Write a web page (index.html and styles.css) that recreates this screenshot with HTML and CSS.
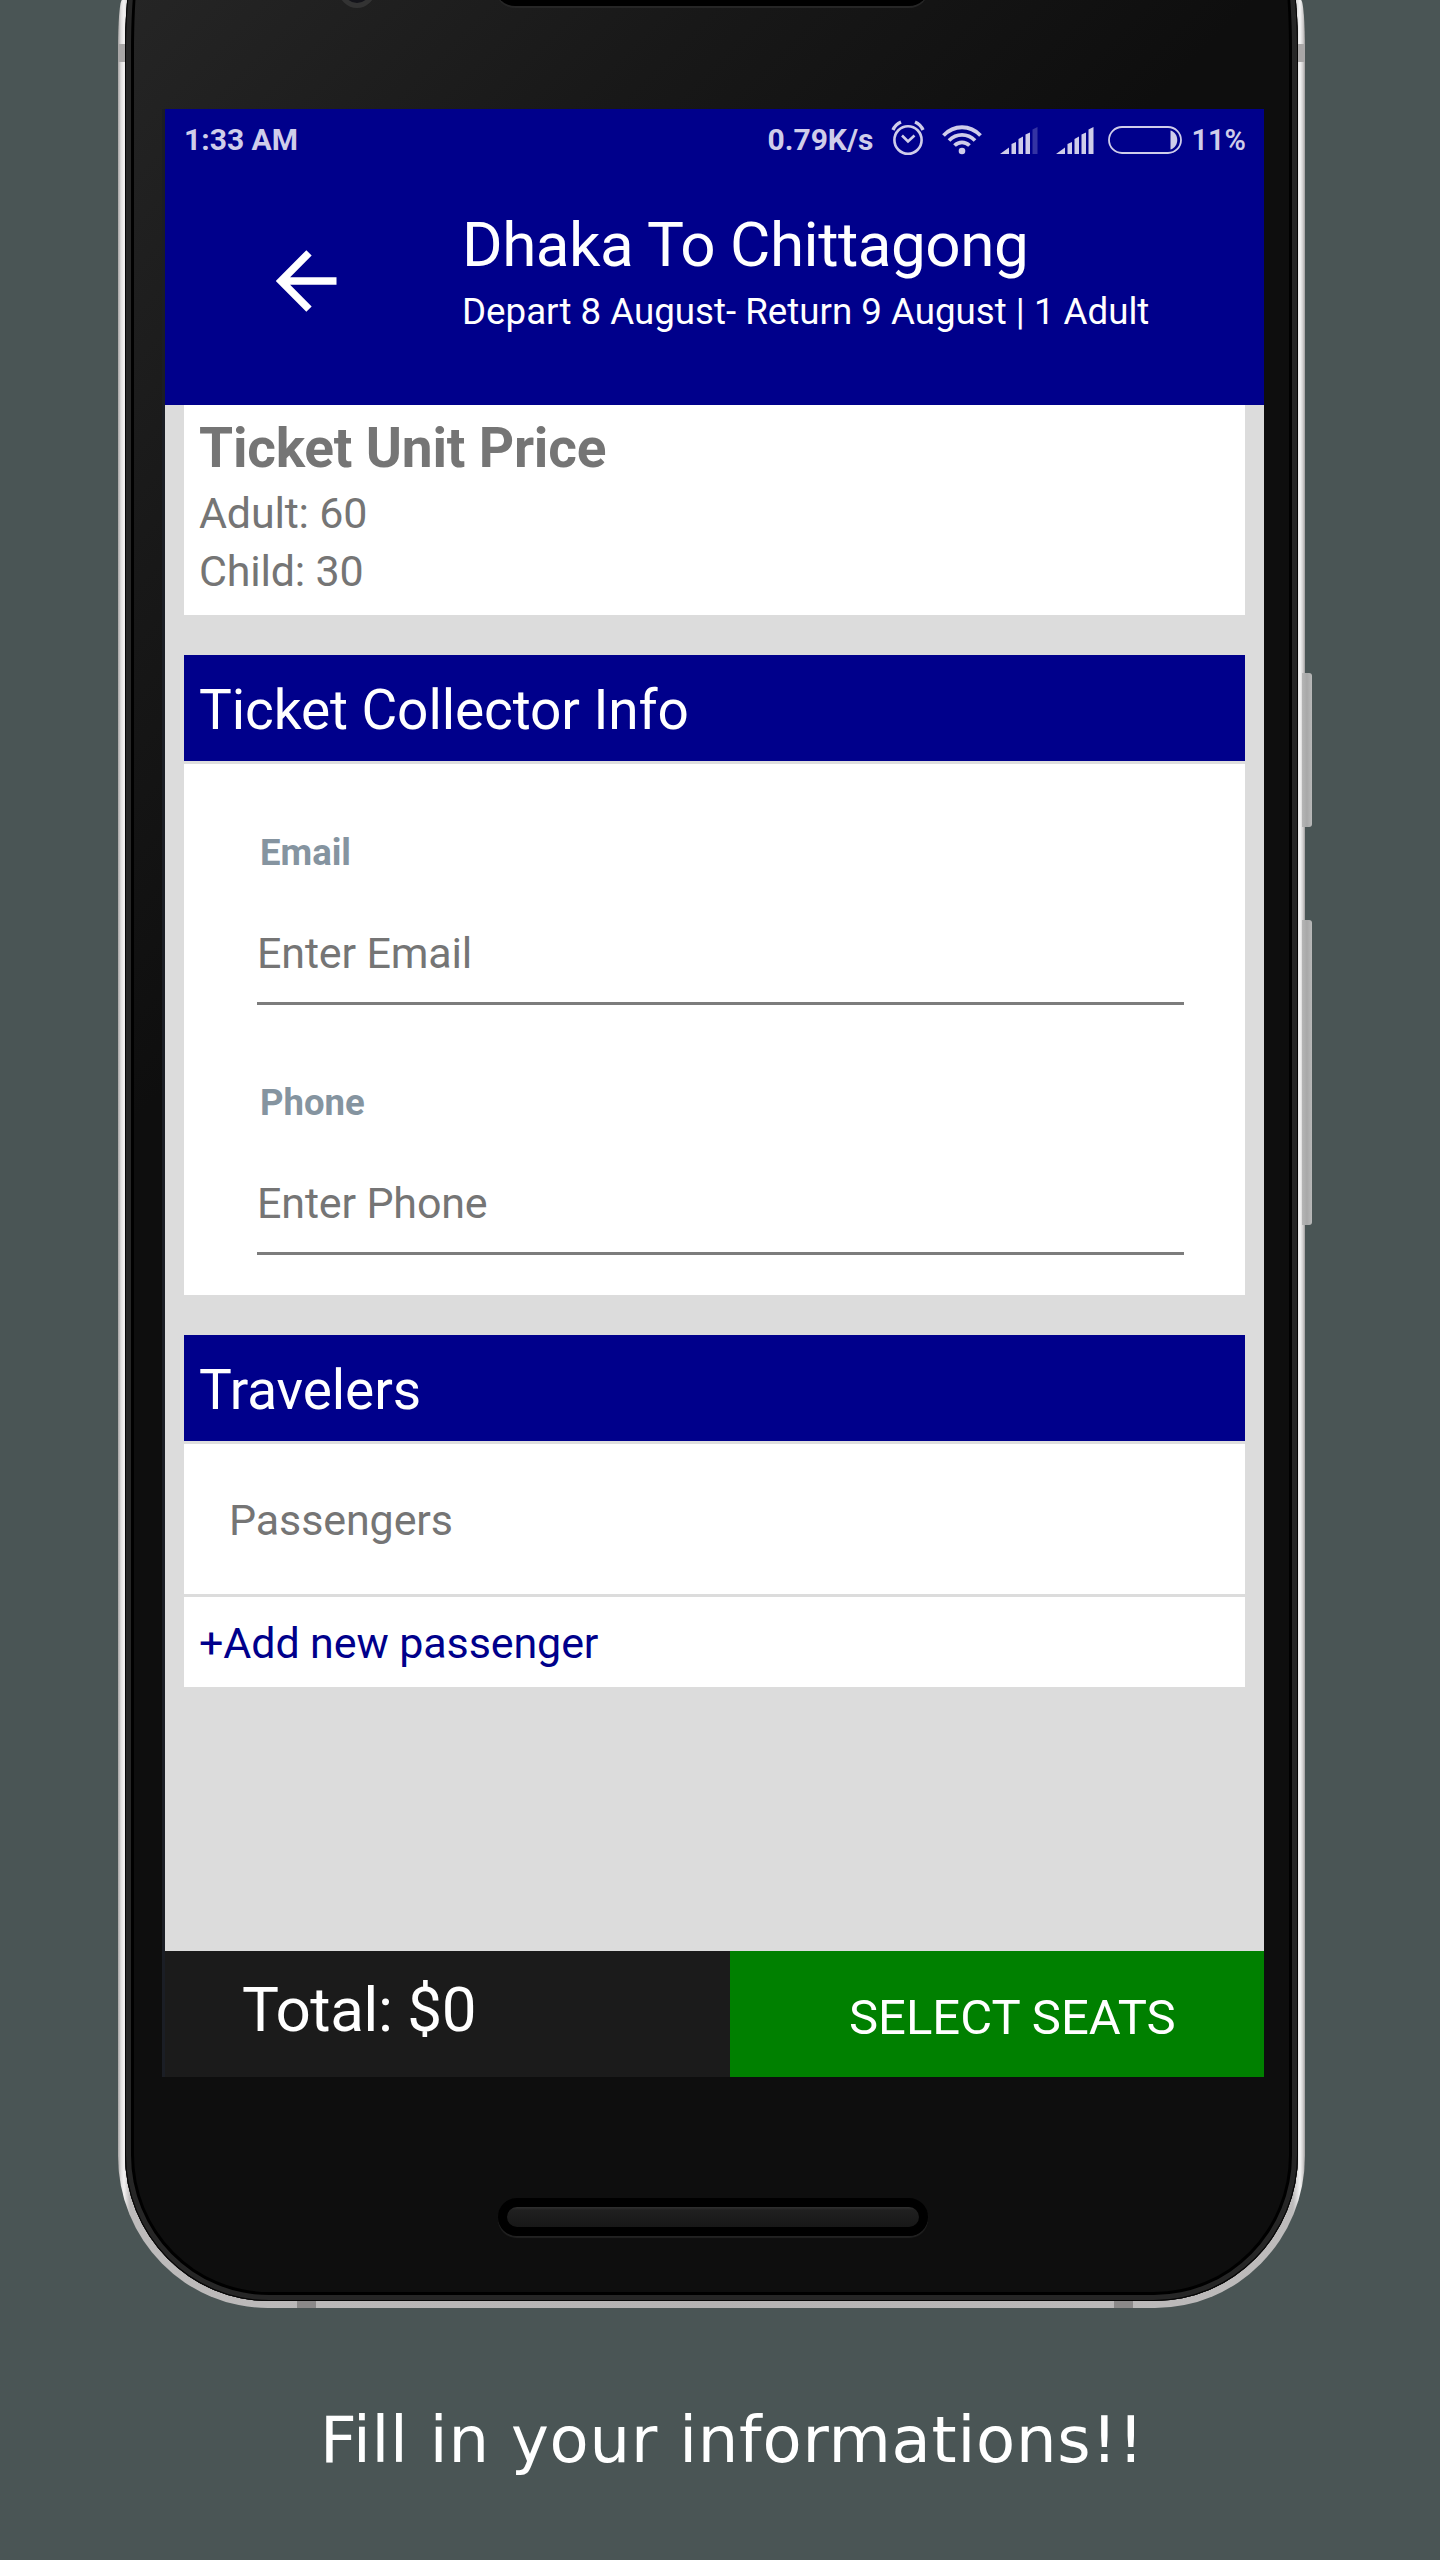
FILE: index.html
```html
<!DOCTYPE html>
<html lang="en">
<head>
<meta charset="utf-8">
<title>Fill in your informations</title>
<link rel="stylesheet" href="styles.css">
</head>
<body>
<main class="page">
  <div class="phone">
    <span class="side-key key-power"></span>
    <span class="side-key key-volume"></span>
    <span class="band band-left"></span>
    <span class="band band-right"></span>
    <span class="band band-bottom-left"></span>
    <span class="band band-bottom-right"></span>
    <div class="bezel">
      <span class="camera"></span>
      <span class="earpiece"></span>
      <div class="screen">
        <header class="app-header">
          <div class="status">
            <span class="t time">1:33 AM</span>
            <span class="t speed">0.79K/s</span>
            <svg class="ico-alarm" width="34" height="36" viewBox="0 0 34 36" fill="none" stroke="#cfcdea" stroke-width="2.6">
              <ellipse cx="17" cy="20" rx="13.6" ry="13.8"/>
              <path d="M11 15.5l6 6 6.5-6"/>
              <path stroke-width="3.4" d="M2 10C3.500 6.500 6.500 3.500 10 2M32 10C30.500 6.500 27.500 3.500 24 2"/>
            </svg>
            <svg class="ico-wifi" width="40" height="30" viewBox="0 0 40 30" fill="none" stroke="#cfcdea" stroke-width="3.8">
              <path d="M1.500 10.500C12-.5 28-.5 38.500 10.500M7 15.500c7.500-7.500 18.500-7.500 26 0M12.500 20.500c4.500-4.300 10.500-4.300 15 0"/>
              <circle cx="20" cy="26" r="3.300" fill="#cfcdea" stroke="none"/>
            </svg>
            <svg class="ico-signal" width="38" height="27" viewBox="0 0 38 27" fill="#cfcdea">
              <path d="M0 27L9 20.500V27zM11.500 27V17l4.500-2v12zM18.500 27V12l4.500-2.500V27zM25.500 27V7.500l4.500-2V27z"/>
              <path opacity=".25" d="M32.500 27V2.500L37.500 0v27z"/>
            </svg>
            <svg class="ico-signal" width="38" height="27" viewBox="0 0 38 27" fill="#cfcdea">
              <path d="M0 27L9 20.500V27zM11.500 27V17l4.500-2v12zM18.500 27V12l4.500-2.500V27zM25.500 27V7.500l4.500-2V27zM32.500 27V2.500L37.500 0v27z"/>
            </svg>
            <svg class="ico-battery" width="74" height="28" viewBox="0 0 74 28">
              <rect x="1" y="1" width="72" height="26" rx="13" fill="none" stroke="#cfcdea" stroke-width="1.800"/>
              <path d="M62.500 4.500c9 2.500 9 16.500 0 19z" fill="#cfcdea"/>
            </svg>
            <span class="t percent">11%</span>
          </div>
          <div class="titlebar">
            <svg class="back" width="61" height="62" viewBox="0 0 61 62" fill="none" stroke="#fff" stroke-width="7.5">
              <path d="M60.500 31H7M33 2.800L5 31l28 28.200"/>
            </svg>
            <div class="titles">
              <h1 class="t title">Dhaka To Chittagong</h1>
              <p class="t subtitle">Depart 8 August- Return 9 August | 1 Adult</p>
            </div>
          </div>
        </header>
        <div class="content">
          <section class="card price">
            <h2 class="t price-title">Ticket Unit Price</h2>
            <p class="t price-row adult">Adult: 60</p>
            <p class="t price-row child">Child: 30</p>
          </section>
          <section class="card collector">
            <h2 class="card-head"><span class="t head-collector">Ticket Collector Info</span></h2>
            <div class="form">
              <label class="field"><span class="t label">Email</span><span class="input"><span class="t hint">Enter Email</span></span></label>
              <label class="field"><span class="t label">Phone</span><span class="input"><span class="t hint">Enter Phone</span></span></label>
            </div>
          </section>
          <section class="card travelers">
            <h2 class="card-head"><span class="t head-travelers">Travelers</span></h2>
            <p class="passengers"><span class="t passengers-text">Passengers</span></p>
            <p class="add"><span class="t add-text">+Add new passenger</span></p>
          </section>
        </div>
        <footer class="bottom-bar">
          <div class="total"><span class="t total-text">Total: $0</span></div>
          <div class="select"><span class="t select-text">SELECT SEATS</span></div>
        </footer>
      </div>
      <span class="speaker"></span>
    </div>
  </div>
  <p class="caption"><span class="t caption-text">Fill in your informations!!</span></p>
</main>
</body>
</html>
```
FILE: styles.css
```css
* { box-sizing: border-box; margin: 0; padding: 0; }
body { background: #4a5555; font-family: Roboto, "Liberation Sans", sans-serif; }
.page { width: 1440px; height: 2560px; overflow: hidden; display: flex; flex-direction: column; }
.t { display: inline-block; white-space: nowrap; font-weight: 400; }

/* phone body */
.phone { position: relative; width: 1187px; height: 2308px; margin-left: 118px; padding: 0 7px 7px; border-radius: 4px 4px 150px 150px / 50px 50px 152px 152px; background: linear-gradient(90deg, #a5a3a3 0, #e0dede 3px, #f4f2f2 6px, #bdbbbb 12px, #b4b2b2 50%, #bdbbbb 1175px, #f4f4f4 1182px, #d0cece 1185px, #a09e9e 1187px); }
.bezel { position: relative; height: 2301px; padding: 108.5px 0 0 40px; border-radius: 6px 6px 144px 144px / 50px 50px 146px 146px; background: linear-gradient(135deg, #252525 0, #181818 420px, #0e0e0e 800px, #0e0e0e 100%); }
/* glass rim, open at the top where the phone leaves the page */
.bezel::before { content: ""; position: absolute; left: 0; right: 0; top: -60px; bottom: 0; border-radius: 20px 20px 144px 144px / 110px 110px 146px 146px; box-shadow: inset 0 0 0 1px #050505, inset 0 0 0 6px #262626, inset 0 0 0 9px #000; clip-path: inset(60px 0 0 0); }
.side-key { position: absolute; left: 1184px; width: 10px; background: linear-gradient(90deg, #b5b5b5, #a8a8a8 5px, #b9b9b9); border-radius: 0 3px 3px 0; }
.key-power { top: 673px; height: 154px; }
.key-volume { top: 920px; height: 305px; }
.band { position: absolute; background: #a9a7a7; }
.band-left, .band-right { top: 44px; width: 7px; height: 18px; }
.band-left { left: 0; }
.band-right { right: 0; }
.band-bottom-left, .band-bottom-right { bottom: 0; width: 19px; height: 7px; background: #8b8989; }
.band-bottom-left { left: 179px; }
.band-bottom-right { left: 996px; }
.camera { position: absolute; left: 214px; top: -27px; width: 36px; height: 35px; border-radius: 50%; background: #14141a; border: 5px solid #333; }
.earpiece { position: absolute; left: 370px; top: -34px; width: 434px; height: 40px; border-radius: 20px; background: #000; box-shadow: 0 2px 0 #262626; }
.speaker { position: absolute; left: 373px; top: 2198px; width: 430px; height: 38px; border: 9px solid #000; border-radius: 19px; background: linear-gradient(#303030, #202020 3px, #171717); box-shadow: 0 2px 1px #222; }

/* app screen */
.screen { width: 1099px; height: 1968px; display: flex; flex-direction: column; background: #dcdcdc; box-shadow: -3px 0 0 #1b1e25; }
.app-header { height: 296px; flex: none; background: #00008b; }
.status { display: flex; align-items: center; height: 62px; padding: 0 18px 0 19px; color: #cfcdea; }
.time { font-size: 30px; font-weight: 700; line-height: 36px; margin-right: auto; }
.speed { font-size: 30px; font-weight: 700; line-height: 36px; }
.ico-alarm { margin-left: 18px; margin-top: -3px; }
.ico-wifi { margin-left: 17px; }
.ico-signal { margin-left: 18px; margin-top: 2px; }
.ico-battery { margin-left: 14px; }
.percent { font-size: 29px; font-weight: 600; line-height: 36px; margin-left: 9px; }
.titlebar { display: flex; color: #fff; padding-left: 111px; }
.back { margin-top: 79px; }
.titles { display: flex; flex-direction: column; align-items: flex-start; margin-left: 125px; padding-top: 38px; }
.title { font-size: 62px; line-height: 72px; letter-spacing: -.5px; }
.subtitle { font-size: 36.700px; line-height: 44px; margin-top: 9px; }
.content { flex: 1; padding: 0 19px; display: flex; flex-direction: column; gap: 40px; }
.card { background: #fff; }
.price { height: 210px; padding: 10px 15px 0; display: flex; flex-direction: column; align-items: flex-start; color: #757575; }
.price-title { font-size: 55px; font-weight: 700; line-height: 66px; letter-spacing: -.2px; margin-bottom: 3px; }
.price-row { font-size: 43px; line-height: 58.500px; letter-spacing: -.2px; }
.card-head { height: 106px; background: #00008b; color: #fff; padding: 22px 15px 0; font-size: 55px; line-height: 66px; letter-spacing: -.1px; }
.collector { height: 640px; }
.form { border-top: 3px solid #dedede; height: 534px; padding: 0 62px 0 73px; display: flex; flex-direction: column; }
.field { height: 250.500px; display: flex; flex-direction: column; align-items: flex-start; }
.label { font-size: 36.500px; line-height: 44px; font-weight: 700; color: #8594a0; margin: 67px 0 0 3px; }
.input { width: 927px; height: 130px; border-bottom: 3px solid #7c7c7c; padding-top: 52px; }
.hint { font-size: 43px; line-height: 52px; color: #757575; letter-spacing: -.15px; }
.travelers { height: 352px; }
.passengers { border-top: 3px solid #dedede; border-bottom: 3px solid #dcdcdc; height: 156px; padding: 48px 45px 0; color: #757575; }
.passengers-text, .add-text { font-size: 43px; line-height: 56px; letter-spacing: -.1px; }
.add { padding: 18px 15px 0; color: #00008b; }
.bottom-bar { height: 125.500px; flex: none; display: flex; }
.total { width: 565px; background: #1b1b1b; color: #fff; padding: 21px 0 0 77px; }
.total-text { font-size: 62px; line-height: 76px; letter-spacing: -.5px; }
.select { flex: 1; background: #008000; color: #fff; padding: 36px 0 0 119px; }
.select-text { font-size: 49px; line-height: 62px; }

.caption { padding: 89px 0 0 320px; color: #fff; }
.caption-text { font-family: "DejaVu Sans", Verdana, sans-serif; font-size: 64px; line-height: 86px; letter-spacing: .8px; }
```
